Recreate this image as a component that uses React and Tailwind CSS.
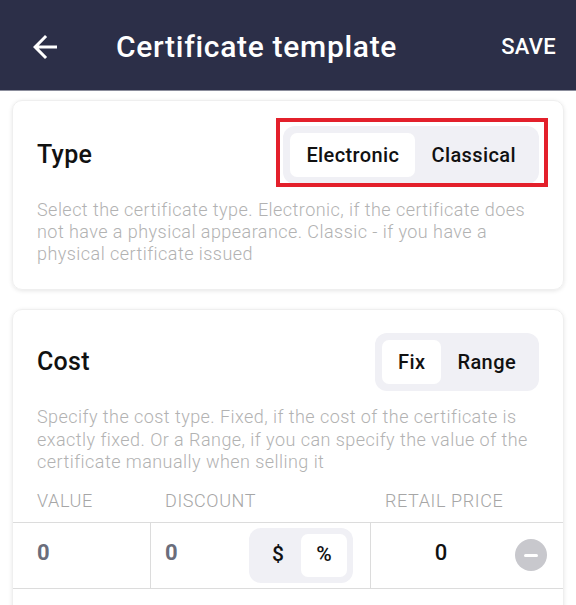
import React, { useState } from 'react';

function Segmented({ options, value, onChange, pad = 'p-[7px]', btn = 'h-[44px] px-[16px]', text = 'text-[20px] tracking-[0.4px]' }) {
  return (
    <div className={`flex rounded-[12px] bg-[#f0f0f5] ${pad}`}>
      {options.map((o) => (
        <button
          key={o}
          onClick={() => onChange(o)}
          className={`${btn} ${text} rounded-[7px] font-medium text-[#111] ${value === o ? 'bg-white' : 'bg-transparent'}`}
        >
          {o}
        </button>
      ))}
    </div>
  );
}

export default function App() {
  const [type, setType] = useState('Electronic');
  const [cost, setCost] = useState('Fix');
  const [unit, setUnit] = useState('%');

  return (
    <div className="min-h-screen bg-white font-['Roboto',sans-serif]">
      {/* Top bar */}
      <div className="flex h-[90px] items-center bg-[#2c2f48] pt-[3px] shadow-[0_1px_0_#8b8d9c]">
        <svg className="ml-[27px]" width="36" height="36" viewBox="0 0 24 24" fill="#ffffff">
          <path d="M20 11H7.83l5.59-5.59L12 4l-8 8 8 8 1.41-1.41L7.83 13H20v-2z" />
        </svg>
        <h1 className="ml-[53px] text-[30px] font-medium tracking-[0.7px] text-white">Certificate template</h1>
        <span className="ml-auto mr-[20px] text-[22px] font-medium tracking-[0.3px] text-white">SAVE</span>
      </div>

      <div className="flex flex-col gap-[19px] px-3 pt-[10px]">
        {/* Type card */}
        <div className="rounded-[10px] border border-[#efefef] px-[24px] pb-[24px] pt-[25px] shadow-[0_1px_4px_rgba(0,0,0,0.10)]">
          <div className="flex items-center justify-between">
            <span className="text-[25px] font-medium tracking-[0.3px] text-[#111]">Type</span>
            <div className="relative">
              <Segmented options={['Electronic', 'Classical']} value={type} onChange={setType} />
              <div className="pointer-events-none absolute -bottom-[3px] -left-[7px] -right-[9px] -top-[8px] border-[4px] border-[#e3202b]" />
            </div>
          </div>
          <p className="mt-[15px] text-[18px] font-light leading-[22px] tracking-[0.45px] text-[#b2b2b2]">
            Select the certificate type. Electronic, if the certificate does not have a physical appearance. Classic - if you have a physical certificate issued
          </p>
        </div>

        {/* Cost card */}
        <div className="rounded-[10px] border border-[#efefef] pt-[23px] shadow-[0_1px_4px_rgba(0,0,0,0.10)]">
          <div className="px-[24px]">
            <div className="flex items-center justify-between">
              <span className="text-[25px] font-medium tracking-[0.3px] text-[#111]">Cost</span>
              <Segmented options={['Fix', 'Range']} value={cost} onChange={setCost} />
            </div>
            <p className="mt-[15px] text-[18px] font-light leading-[22.5px] tracking-[0.45px] text-[#b2b2b2]">
              Specify the cost type. Fixed, if the cost of the certificate is exactly fixed. Or a Range, if you can specify the value of the certificate manually when selling it
            </p>
          </div>

          <div className="grid grid-cols-[138px_220px_1fr] pb-[10px] pt-[16px] text-[18px] font-light leading-[22px] tracking-[0.6px] text-[#a6a6a6]">
            <span className="pl-[24px]">VALUE</span>
            <span className="pl-[14px]">DISCOUNT</span>
            <span className="pl-[14px]">RETAIL PRICE</span>
          </div>

          <div className="grid h-[67px] grid-cols-[138px_220px_1fr] border-y border-[#dcdcdc]">
            <div className="flex items-center border-r border-[#dcdcdc] pb-[5px] pl-[24px] text-[22px] font-bold text-[#6b6d7b]">0</div>
            <div className="flex items-center justify-between border-r border-[#dcdcdc] pl-[14px] pr-[17px]">
              <span className="pb-[5px] text-[22px] font-bold text-[#6b6d7b]">0</span>
              <Segmented
                options={['$', '%']}
                value={unit}
                onChange={setUnit}
                pad="p-[6px]"
                btn="h-[43px] w-[46px]"
                text="text-[21px]"
              />
            </div>
            <div className="flex items-center pr-[16px]">
              <span className="flex-1 pb-[5px] pr-[4px] text-center text-[22px] font-medium text-[#111]">0</span>
              <div className="flex h-[32px] w-[32px] items-center justify-center rounded-full bg-[#c8c8cd]">
                <div className="h-[3px] w-[14px] rounded bg-white" />
              </div>
            </div>
          </div>
          <div className="h-[60px]" />
        </div>
      </div>
    </div>
  );
}
